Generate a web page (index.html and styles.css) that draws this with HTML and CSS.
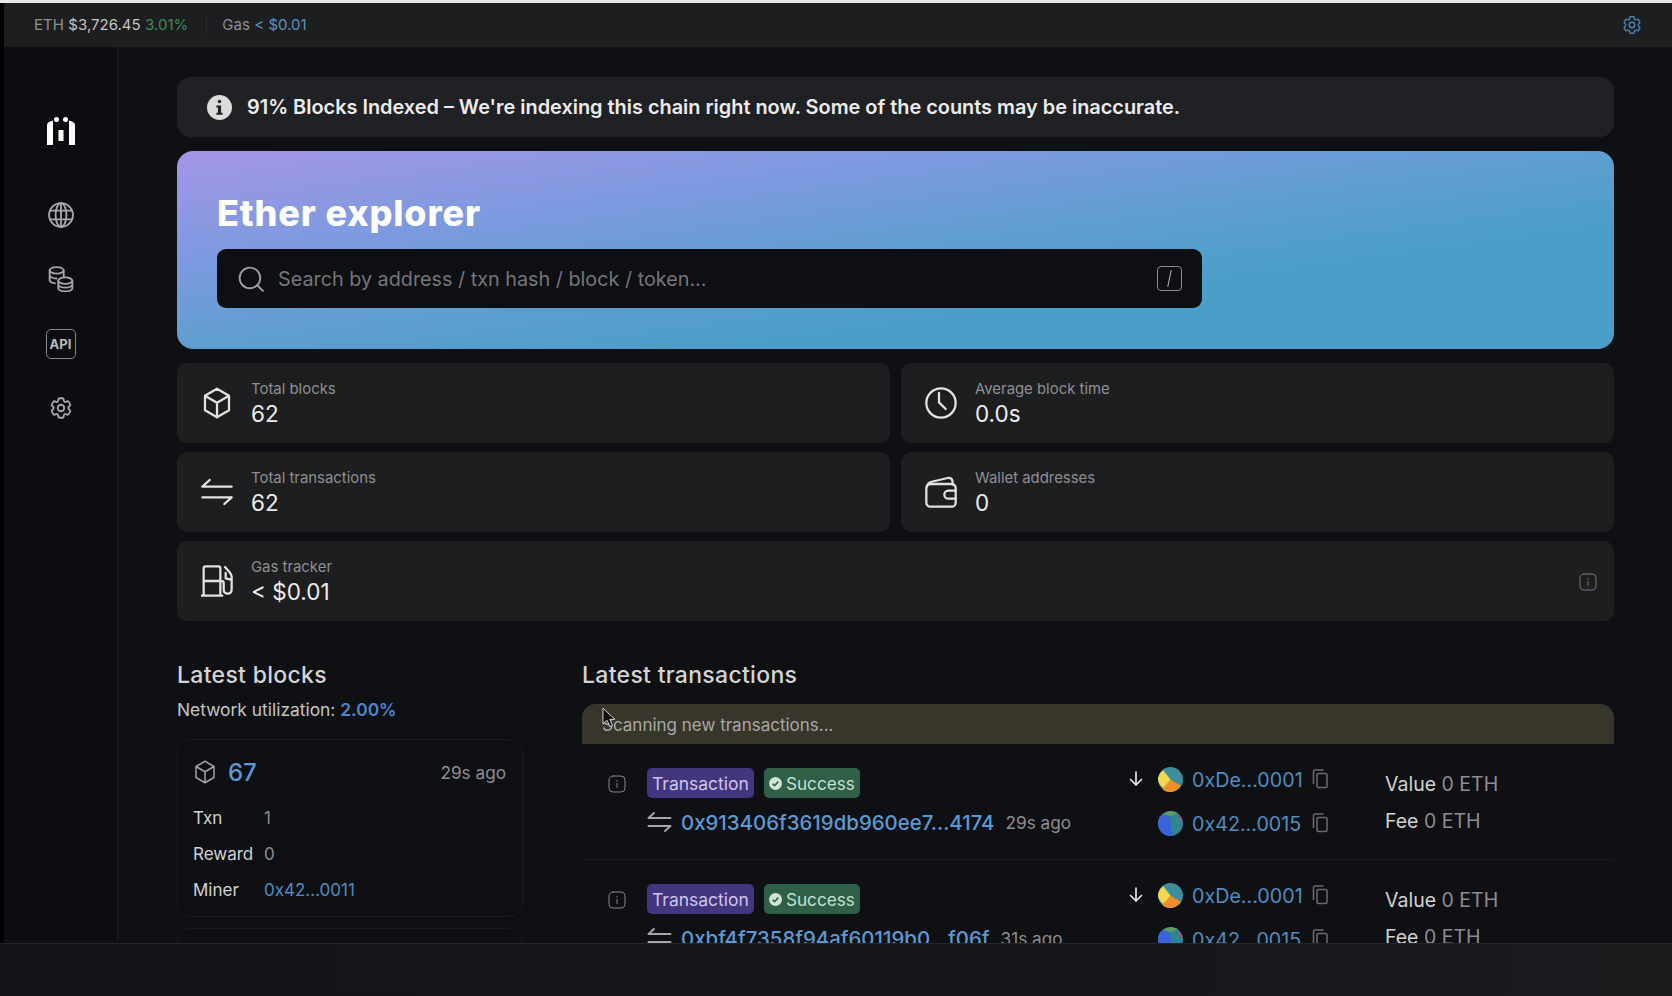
FILE: index.html
```html
<!doctype html>
<html>
<head>
<meta charset="utf-8">
<title>Ether explorer</title>
<link rel="stylesheet" href="styles.css">
</head>
<body>
<svg class="defs" width="0" height="0">
    <symbol id="gear" viewBox="0 0 24 24">
        <path d="M9.594 3.94c.09-.542.56-.94 1.11-.94h2.593c.55 0 1.02.398 1.11.94l.213 1.281c.063.374.313.686.645.87.074.04.147.083.22.127.325.196.72.257 1.075.124l1.217-.456a1.125 1.125 0 0 1 1.37.49l1.296 2.247a1.125 1.125 0 0 1-.26 1.431l-1.003.827c-.293.241-.438.613-.43.992a7.723 7.723 0 0 1 0 .255c-.008.378.137.75.43.991l1.004.827c.424.35.534.955.26 1.43l-1.298 2.247a1.125 1.125 0 0 1-1.369.491l-1.217-.456c-.355-.133-.75-.072-1.076.124a6.47 6.47 0 0 1-.22.128c-.331.183-.581.495-.644.869l-.213 1.281c-.09.543-.56.94-1.11.94h-2.594c-.55 0-1.019-.398-1.11-.94l-.213-1.281c-.062-.374-.312-.686-.644-.87a6.52 6.52 0 0 1-.22-.127c-.325-.196-.72-.257-1.076-.124l-1.217.456a1.125 1.125 0 0 1-1.369-.49l-1.297-2.247a1.125 1.125 0 0 1 .26-1.431l1.004-.827c.292-.24.437-.613.43-.991a6.932 6.932 0 0 1 0-.255c.007-.38-.138-.751-.43-.992l-1.004-.827a1.125 1.125 0 0 1-.26-1.43l1.297-2.247a1.125 1.125 0 0 1 1.37-.491l1.216.456c.356.133.751.072 1.076-.124.072-.044.146-.086.22-.128.332-.183.582-.495.644-.869l.214-1.28Z"/>
        <circle cx="12" cy="12" r="3"/>
    </symbol>
    <symbol id="cube" viewBox="0 0 24 24">
        <path d="m21 6.500-9-5.250L3 6.500m18 0-9 5.250m9-5.250v11l-9 5.250M3 6.500l9 5.250M3 6.500v11l9 5.250m0-11v11"/>
    </symbol>
    <symbol id="swap" viewBox="0 0 24 24">
        <path d="M1 8h22M1 8l5.500-5M1 16h22M23 16l-5.500 5"/>
    </symbol>
    <symbol id="info" viewBox="0 0 18 18">
        <rect x="1" y="1" width="16" height="16" rx="4"/>
        <path d="M9 8.500v4M9 5.500v.8"/>
    </symbol>
    <symbol id="copy" viewBox="0 0 16 20">
        <rect x="5" y="4.500" width="10" height="14" rx="1.500"/>
        <path d="M1.500 14.500V2.500q0-1.500 1.500-1.500h8"/>
    </symbol>
    <symbol id="avatar-a" viewBox="0 0 24 24">
        <circle cx="12" cy="12" r="12" fill="#3c8e9a"/>
        <path d="M12 12 22 18A12 12 0 0 1 5 22L4 15Z" fill="#ef8f2b"/>
        <path d="M5 3 12 12 5 20A12 12 0 0 1 0 12 12 12 0 0 1 5 3Z" fill="#f2d84c"/>
    </symbol>
    <symbol id="avatar-b" viewBox="0 0 24 24">
        <circle cx="12" cy="12" r="12" fill="#2f8590"/>
        <path d="M11 4 14 24A12 12 0 0 1 0 12 12 12 0 0 1 4 3Z" fill="#3a63db"/>
        <path d="M5 3A12 12 0 0 1 19 2L12 5Z" fill="#5f9c63"/>
        <path d="M20 3 24 9 22 10Z" fill="#e0355f"/>
    </symbol>
</svg>

<div class="top-line"></div>
<div class="frame">
    <header class="topbar">
        <span class="muted">ETH</span>
        <span class="price">$3,726.45</span>
        <span class="change">3.01%</span>
        <span class="sep"></span>
        <span class="muted">Gas</span>
        <span class="gas">&lt; $0.01</span>
        <svg class="icon top-gear"><use href="#gear"/></svg>
    </header>

    <div class="layout">
        <nav class="sidebar">
            <svg class="logo" viewBox="0 0 28 28">
                <path d="M0 28V8.500Q0 5.500 3 4.500L6 3.500V28ZM28 28V8.500Q28 5.500 25 4.500L22 3.500V28ZM11.500 13h5v11h-5Z" fill="#fff"/>
                <circle cx="9.500" cy="2.500" r="2.500" fill="#fff"/>
                <circle cx="18.500" cy="2.500" r="2.500" fill="#fff"/>
            </svg>
            <svg class="icon nav-icon" viewBox="0 0 24 24">
                <circle cx="12" cy="12" r="11"/>
                <ellipse cx="12" cy="12" rx="5" ry="11"/>
                <path d="M12 1v22M2 8h20M2 16h20"/>
            </svg>
            <svg class="icon nav-icon" viewBox="0 0 24 24">
                <ellipse cx="8" cy="4" rx="6.500" ry="3"/>
                <path d="M1.500 4v9c0 1.400 2 2.600 5 3M1.500 8.500c0 1.600 3 3 6.500 3M1.500 13c0 .5.200 1 .8 1.400M14.500 4v6"/>
                <ellipse cx="16" cy="13.500" rx="6.500" ry="3"/>
                <path d="M9.500 13.500v7c0 1.700 3 3 6.500 3s6.500-1.300 6.500-3v-7M9.500 17c0 1.700 3 3 6.500 3s6.500-1.300 6.500-3"/>
            </svg>
            <div class="api-icon">API</div>
            <svg class="icon nav-icon"><use href="#gear"/></svg>
        </nav>

        <main class="content">
            <div class="alert">
                <svg class="alert-icon" viewBox="0 0 24 24">
                    <circle cx="12" cy="12" r="12" fill="#dcdcdc"/>
                    <rect x="10.300" y="4.500" width="3.400" height="3.400" rx="1.700" fill="#202124"/>
                    <path d="M9 10h4.500v7H15v2H9v-2h1.500v-5H9Z" fill="#202124"/>
                </svg>
                <span>91% Blocks Indexed – We're indexing this chain right now. Some of the counts may be inaccurate.</span>
            </div>

            <section class="hero">
                <h1>Ether explorer</h1>
                <div class="search">
                    <svg class="icon search-icon" viewBox="0 0 24 24">
                        <circle cx="11" cy="11" r="9.500"/>
                        <path d="m18 18 5 5"/>
                    </svg>
                    <span class="placeholder">Search by address / txn hash / block / token...</span>
                    <span class="slash"><i></i></span>
                </div>
            </section>

            <section class="stats">
                <div class="stat">
                    <svg class="icon stat-icon"><use href="#cube"/></svg>
                    <div><div class="stat-label">Total blocks</div><div class="stat-value">62</div></div>
                </div>
                <div class="stat">
                    <svg class="icon stat-icon" viewBox="0 0 24 24">
                        <circle cx="12" cy="12" r="11"/>
                        <path d="M10.500 4.500V11.500L15.500 16.500"/>
                    </svg>
                    <div><div class="stat-label">Average block time</div><div class="stat-value">0.0s</div></div>
                </div>
                <div class="stat">
                    <svg class="icon stat-icon"><use href="#swap"/></svg>
                    <div><div class="stat-label">Total transactions</div><div class="stat-value">62</div></div>
                </div>
                <div class="stat">
                    <svg class="icon stat-icon" viewBox="0 0 24 24">
                        <rect x="1" y="6" width="22" height="17" rx="3"/>
                        <path d="M1.500 8Q2 5 5 4.300L17 1.500Q20 1 20.500 3.500L21 6.500M23 11h-5.500a3 3 0 0 0 0 6H23"/>
                    </svg>
                    <div><div class="stat-label">Wallet addresses</div><div class="stat-value">0</div></div>
                </div>
                <div class="stat stat-wide">
                    <svg class="icon stat-icon" viewBox="0 0 24 24">
                        <path d="M0 23h16M2 23V2.500Q2 1 3.500 1H13q1.500 0 1.500 1.500V23M2 12h12.500M18 1.500l3.500 4Q23 7 23 9v9q0 3.500-3 3.500T17 18v-5q0-1-2.500-1M18.500 6v4l4 1"/>
                    </svg>
                    <div><div class="stat-label">Gas tracker</div><div class="stat-value">&lt; $0.01</div></div>
                    <svg class="icon stat-info"><use href="#info"/></svg>
                </div>
            </section>

            <section class="latest">
                <div class="blocks">
                    <h2>Latest blocks</h2>
                    <p class="utilization">Network utilization: <b>2.00%</b></p>
                    <div class="block-card">
                        <div class="block-head">
                            <svg class="icon block-icon"><use href="#cube"/></svg>
                            <a class="block-num">67</a>
                            <span class="ago">29s ago</span>
                        </div>
                        <div class="block-grid">
                            <span>Txn</span><span class="dim">1</span>
                            <span>Reward</span><span class="dim">0</span>
                            <span>Miner</span><a class="link">0x42...0011</a>
                        </div>
                    </div>
                    <div class="block-card"></div>
                </div>

                <div class="transactions">
                    <h2>Latest transactions</h2>
                    <div class="scanning">Scanning new transactions...</div>

                    <div class="tx">
                        <svg class="icon tx-info"><use href="#info"/></svg>
                        <div>
                            <div class="badges">
                                <span class="badge badge-type">Transaction</span>
                                <span class="badge badge-ok">
                                    <svg class="check" viewBox="0 0 16 16"><circle cx="8" cy="8" r="8" fill="#cfe5d6"/><path d="m4.500 8.300 2.400 2.400 4.500-5" fill="none" stroke="#2f5f46" stroke-width="2"/></svg>
                                    Success
                                </span>
                            </div>
                            <div class="hash-row">
                                <svg class="icon hash-icon"><use href="#swap"/></svg>
                                <a class="hash">0x913406f3619db960ee7...4174</a>
                                <span class="ago">29s ago</span>
                            </div>
                        </div>
                        <div class="parties">
                            <svg class="icon arrow" viewBox="0 0 16 16"><path d="M8 1v13M2.500 8.500 8 14l5.500-5.500"/></svg>
                            <svg class="avatar"><use href="#avatar-a"/></svg>
                            <a class="link addr">0xDe...0001</a>
                            <svg class="icon copy"><use href="#copy"/></svg>
                            <span></span>
                            <svg class="avatar"><use href="#avatar-b"/></svg>
                            <a class="link addr">0x42...0015</a>
                            <svg class="icon copy"><use href="#copy"/></svg>
                        </div>
                        <div class="amounts">
                            <div>Value <span class="dim">0 ETH</span></div>
                            <div>Fee <span class="dim">0 ETH</span></div>
                        </div>
                    </div>

                    <div class="tx">
                        <svg class="icon tx-info"><use href="#info"/></svg>
                        <div>
                            <div class="badges">
                                <span class="badge badge-type">Transaction</span>
                                <span class="badge badge-ok">
                                    <svg class="check" viewBox="0 0 16 16"><circle cx="8" cy="8" r="8" fill="#cfe5d6"/><path d="m4.500 8.300 2.400 2.400 4.500-5" fill="none" stroke="#2f5f46" stroke-width="2"/></svg>
                                    Success
                                </span>
                            </div>
                            <div class="hash-row">
                                <svg class="icon hash-icon"><use href="#swap"/></svg>
                                <a class="hash">0xbf4f7358f94af60119b0...f06f</a>
                                <span class="ago">31s ago</span>
                            </div>
                        </div>
                        <div class="parties">
                            <svg class="icon arrow" viewBox="0 0 16 16"><path d="M8 1v13M2.500 8.500 8 14l5.500-5.500"/></svg>
                            <svg class="avatar"><use href="#avatar-a"/></svg>
                            <a class="link addr">0xDe...0001</a>
                            <svg class="icon copy"><use href="#copy"/></svg>
                            <span></span>
                            <svg class="avatar"><use href="#avatar-b"/></svg>
                            <a class="link addr">0x42...0015</a>
                            <svg class="icon copy"><use href="#copy"/></svg>
                        </div>
                        <div class="amounts">
                            <div>Value <span class="dim">0 ETH</span></div>
                            <div>Fee <span class="dim">0 ETH</span></div>
                        </div>
                    </div>
                </div>
            </section>
        </main>
    </div>

    <svg class="cursor" viewBox="0 0 14 22">
        <path d="M1 1v17l4.500-4 3 7 3-1.300-3-6.700H14Z" fill="#111" stroke="#ddd" stroke-width="1"/>
    </svg>
</div>
<div class="bottom-bar"></div>
</body>
</html>
```

FILE: styles.css
```css
* { box-sizing: border-box; }
html, body { margin: 0; height: 100%; }
body {
    width: 1672px;
    height: 996px;
    overflow: hidden;
    background: #14161a;
    color: #e6e6e6;
    font-family: Inter, "Liberation Sans", sans-serif;
    font-size: 17px;
}
a { text-decoration: none; }
.defs { position: absolute; }
.icon {
    fill: none;
    stroke: currentColor;
    stroke-width: 1.5;
    stroke-linecap: round;
    stroke-linejoin: round;
}

.top-line { height: 3px; background: #e8e8e8; }
.frame {
    position: relative;
    height: 940px;
    overflow: hidden;
    border-left: 4px solid #000;
    background: #0f1013;
}
.bottom-bar {
    height: 53px;
    background: linear-gradient(90deg, #13151a, #14161a 60%, #1a1b1d);
    border-top: 1px solid #24262a;
}

/* top bar */
.topbar {
    display: flex;
    align-items: center;
    gap: 4.500px;
    height: 44px;
    padding: 0 0 1px 30px;
    background: #1d1e20;
    font-size: 15px;
}
.muted { color: #8f9093; }
.price { color: #c4c4c4; }
.change { color: #3f8a5c; }
.sep { width: 1px; height: 18px; margin: 0 11px 0 13px; background: #2c2d30; }
.gas { color: #5b93bf; }
.top-gear { width: 22px; height: 22px; margin-left: auto; margin-right: 29px; color: #4a86b4; }

/* sidebar */
.layout { display: flex; }
.sidebar {
    display: flex;
    flex: none;
    flex-direction: column;
    align-items: center;
    width: 114px;
    height: 893px;
    padding-top: 70px;
    background: #0c0d10;
    border-right: 1px solid #1d1e21;
    color: #a6a8ac;
}
.logo { width: 28px; height: 28px; }
.nav-icon { width: 26px; height: 26px; margin-bottom: 38px; stroke-width: 1.7; }
.logo + .nav-icon { margin-top: 57px; }
.api-icon {
    display: flex;
    align-items: center;
    justify-content: center;
    width: 30px;
    height: 30px;
    margin: -1px 0 36px;
    border: 1.5px solid #85878b;
    border-radius: 5px;
    color: #bcbcbc;
    font-size: 13px;
    font-weight: 700;
}

/* main column */
.content { flex: 1; padding: 30px 58px 0 59px; }
.alert {
    display: flex;
    align-items: center;
    gap: 15px;
    height: 60px;
    padding-left: 30px;
    border-radius: 14px;
    background: #202124;
    font-size: 19.900px;
    font-weight: 600;
    color: #ececec;
}
.alert-icon { width: 25px; height: 25px; }

.hero {
    height: 198px;
    margin-top: 14px;
    padding: 40px 40px 0;
    border-radius: 16px;
    background: linear-gradient(to bottom right, #a595e8 0, #7a9ade 30%, #5f9ed0 50%, #4a9ec7 70%);
}
.hero h1 {
    margin: 0;
    height: 58px;
    line-height: 44px;
    color: #fff;
    font-size: 36px;
    font-weight: 800;
    letter-spacing: 0.850px;
}
.search {
    display: flex;
    align-items: center;
    width: 985px;
    height: 59px;
    padding: 0 20px 0 21px;
    border-radius: 9px;
    background: #0e0f12;
}
.search-icon { width: 26px; height: 26px; color: #9a9c9f; stroke-width: 1.8; }
.placeholder { margin-left: 14px; color: #74767a; font-size: 19.800px; }
.slash {
    display: flex;
    align-items: center;
    justify-content: center;
    width: 25px;
    height: 25px;
    margin-left: auto;
    border: 1px solid #8a8c90;
    border-radius: 4px;
}
.slash i { width: 1px; height: 17px; background: #b5b5b5; transform: rotate(12deg); }

.stats {
    display: grid;
    grid-template-columns: 1fr 1fr;
    grid-auto-rows: 80px;
    gap: 9px 11px;
    margin-top: 14px;
}
.stat {
    display: flex;
    align-items: center;
    gap: 18px;
    padding: 1px 0 0 24px;
    border-radius: 10px;
    background: #1d1e20;
}
.stat-wide { grid-column: 1 / 3; }
.stat-icon { flex: none; width: 32px; height: 32px; margin-top: -1px; color: #e2e2e2; stroke-width: 1.7; }
.stat-label { color: #8f9093; font-size: 14.900px; line-height: 19px; }
.stat-value { color: #ececec; font-size: 22.500px; line-height: 29px; }
.stat-info { width: 18px; height: 18px; margin-left: auto; margin-right: 17px; color: #77797d; stroke-width: 1; }

/* latest blocks + transactions */
.latest {
    display: grid;
    grid-template-columns: 346px 1fr;
    gap: 59px;
    margin-top: 39px;
}
h2 {
    margin: 0;
    height: 30px;
    color: #d4d4d4;
    font-size: 23px;
    font-weight: 500;
    line-height: 30px;
    letter-spacing: 0.3px;
}
.utilization { margin: 10px 0 19px; line-height: 20px; color: #c4c4c4; font-size: 17.400px; }
.utilization b { color: #4a86d0; font-weight: 600; }
.block-card {
    height: 178px;
    margin-bottom: 11px;
    padding: 15px 16px 0 15px;
    border: 1px solid #1a1b1f;
    border-radius: 14px;
    background: #0e0f12;
}
.block-head { display: flex; align-items: center; height: 34px; }
.block-icon { width: 24px; height: 24px; margin-right: 11px; color: #a0a2a6; }
.block-num { color: #5b9bd5; font-size: 24px; font-weight: 500; }
.block-head .ago { margin-left: auto; }
.ago { color: #8c8e91; font-size: 17.200px; }
.block-grid {
    display: grid;
    grid-template-columns: 71px 1fr;
    grid-auto-rows: 36px;
    align-items: center;
    margin-top: 11px;
    color: #d2d2d2;
}
.dim { color: #8c8e91; }
.link { color: #4f8dc0; }

.scanning {
    height: 40px;
    margin-top: 14px;
    padding-left: 20px;
    border-radius: 14px 14px 0 0;
    background: #38352b;
    color: #a9a9a6;
    line-height: 42px;
}
.tx {
    display: grid;
    grid-template-columns: 39px 481px 257px 1fr;
    height: 116px;
    padding: 24px 0 0 26px;
    border-bottom: 1px solid #1a1b1f;
}
.tx-info { width: 18px; height: 18px; margin-top: 7px; color: #85878b; stroke-width: 1; }
.badges { display: flex; gap: 10px; }
.badge {
    display: flex;
    align-items: center;
    height: 30px;
    padding: 0 5px;
    border-radius: 5px;
    font-size: 17.500px;
}
.badge-type { background: #43367f; color: #cfc4ee; }
.badge-ok { gap: 4px; background: #2f5f46; color: #c5e0cf; font-size: 17.200px; }
.check { width: 13px; height: 13px; }
.hash-row { display: flex; align-items: center; height: 24px; margin-top: 12px; }
.hash-icon { width: 25px; height: 24px; margin-right: 9px; color: #a4a6a9; stroke-width: 1.900; }
.hash { margin-right: 11px; color: #5b9bd5; font-size: 20.400px; font-weight: 500; }
.parties {
    display: grid;
    grid-template-columns: 30px 25px auto 1fr;
    grid-auto-rows: 24px;
    row-gap: 20px;
    align-items: center;
    align-content: start;
    margin-top: -1px;
}
.arrow { width: 16px; height: 16px; color: #e4e4e4; stroke-width: 1.7; }
.avatar { width: 25px; height: 25px; }
.addr { margin-left: 9px; padding-top: 1px; font-size: 19.700px; }
.copy { width: 16px; height: 20px; margin-left: 9px; color: #696b6f; }
.amounts { margin-top: 4px; color: #d2d2d2; font-size: 19.500px; }
.amounts div { height: 24px; line-height: 24px; margin-bottom: 13px; }

.cursor { position: absolute; left: 598px; top: 704px; width: 13px; height: 21px; }
```
